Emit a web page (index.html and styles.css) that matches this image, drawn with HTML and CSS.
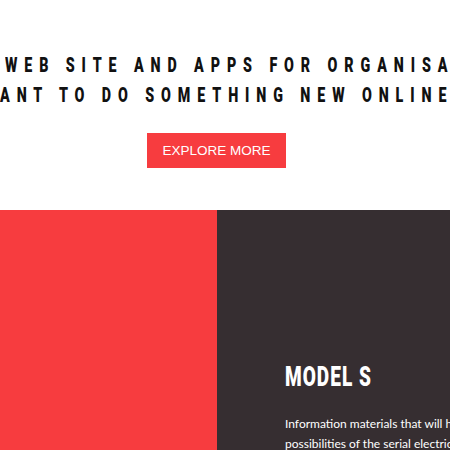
FILE: index.html
```html
<!DOCTYPE html>
<html>
<head>
<meta charset="utf-8">
<link rel="stylesheet" href="styles.css">
</head>
<body>
<header class="hero">
  <h1 class="hero-title">
    <span class="line line-1">WEB SITE AND APPS FOR ORGANISA</span>
    <span class="line line-2">ANT TO DO SOMETHING NEW ONLINE</span>
  </h1>
  <div class="hero-action">
    <a class="btn" href="#">EXPLORE MORE</a>
  </div>
</header>
<section class="feature">
  <div class="feature-media"></div>
  <div class="feature-body">
    <h2 class="feature-title"><span class="narrow">MODEL S</span></h2>
    <p class="feature-text">Information materials that will help you understand the possibilities of the serial electric car</p>
  </div>
</section>
</body>
</html>
```
FILE: styles.css
```css
html, body {
  margin: 0;
  padding: 0;
  background: #fff;
  overflow: hidden;
}
.hero {
  padding-top: 50px;
  height: 160px;
}
.hero-title {
  margin: 0;
  font-family: Roboto, "Liberation Sans", sans-serif;
  font-weight: 900;
  font-size: 21px;
  line-height: 30px;
  letter-spacing: 10.15px;
  color: #111;
  white-space: nowrap;
  overflow: hidden;
}
.line {
  display: block;
  width: 700px;
  transform: scaleX(0.68);
  transform-origin: left center;
}
.line-1 {
  margin-left: 5px;
}
.hero-action {
  display: flex;
  justify-content: center;
  margin-top: 23px;
  padding-right: 17px;
}
.btn {
  display: inline-block;
  background: #f73c3f;
  color: #fff;
  font-family: "Liberation Sans", Arial, sans-serif;
  font-size: 13.5px;
  line-height: 35px;
  height: 35px;
  padding: 0 15px;
  text-decoration: none;
}
.feature {
  display: flex;
  height: 240px;
}
.feature-media {
  width: 217px;
  background: #f73c3f;
}
.feature-body {
  flex: 1;
  background: #362e31;
  padding: 150px 0 0 68px;
  overflow: hidden;
}
.feature-title {
  margin: 0;
  font-family: Roboto, "Liberation Sans", sans-serif;
  font-weight: 900;
  font-size: 28px;
  line-height: 34px;
  letter-spacing: 1.5px;
  color: #fff;
  white-space: nowrap;
}
.narrow {
  display: inline-block;
  transform: scaleX(0.68);
  transform-origin: left center;
}
.feature-text {
  margin: 20px 0 0;
  font-family: Lato, sans-serif;
  font-size: 12px;
  line-height: 20px;
  color: #fff;
  width: 320px;
}
```
